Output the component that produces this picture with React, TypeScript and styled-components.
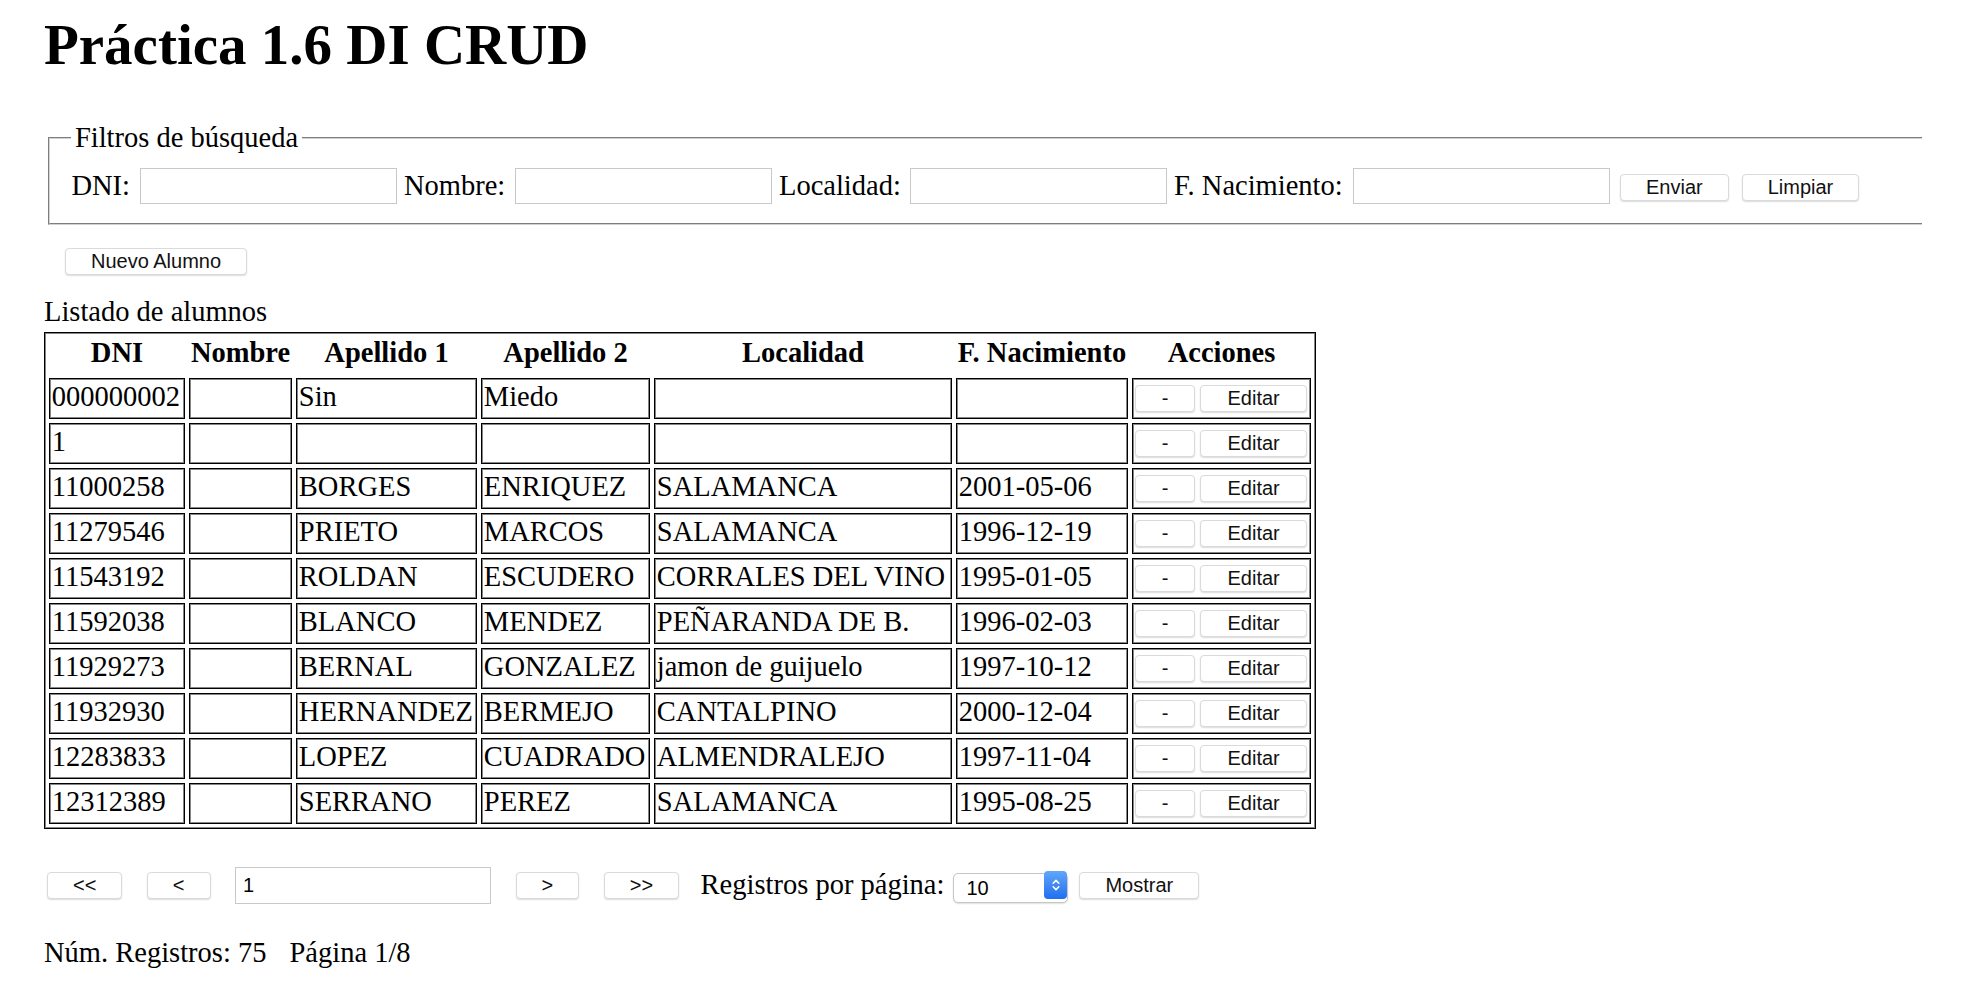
import React from "react";
import styled, { createGlobalStyle } from "styled-components";

const GlobalStyle = createGlobalStyle`
  html, body { margin: 0; padding: 0; background: #ffffff; }
  body {
    font-family: "Liberation Serif", "Times New Roman", Times, serif;
    font-size: 28.5px;
    color: #000;
  }
`;

const Page = styled.div`
  padding: 11.5px 44px 30px;
`;

const Title = styled.h1`
  margin: 0;
  font-size: 57px;
  font-weight: 700;
  line-height: normal;
`;

const Filters = styled.fieldset`
  box-sizing: border-box;
  width: 1874px;
  margin: 45.5px 0 0 4px;
  padding: 11.5px 21.4px 17.8px;
  border: 2px groove #d2d2d2;
  border-right: none;
  min-inline-size: 0;
`;

const Legend = styled.legend`
  padding: 0 3.5px;
  font-size: 28.5px;
  line-height: normal;
`;

const FilterRow = styled.div`
  display: flex;
  align-items: center;
  height: 40px;
  gap: 7px;
`;

const Field = styled.label`
  display: flex;
  align-items: center;
  flex: none;
`;

const FieldLabel = styled.span<{ $w: number }>`
  width: ${(p) => p.$w}px;
  flex: none;
  white-space: nowrap;
`;

const TextInput = styled.input<{ $w?: number; $h?: number }>`
  box-sizing: border-box;
  width: ${(p) => p.$w ?? 257}px;
  height: ${(p) => p.$h ?? 36}px;
  margin: 0;
  padding: 0 7px;
  border: 1px solid #c9c9c9;
  border-radius: 0;
  background: #fff;
  font-family: "Liberation Sans", Arial, Helvetica, sans-serif;
  font-size: 20px;
  color: #000;
  outline: none;
  flex: none;
`;

const Button = styled.button`
  box-sizing: border-box;
  height: 27px;
  margin: 0;
  padding: 0 25px;
  border: 1px solid #dadada;
  border-radius: 4px;
  background: #fff;
  box-shadow: 0 1px 1.5px rgba(0, 0, 0, 0.14);
  font-family: "Liberation Sans", Arial, Helvetica, sans-serif;
  font-size: 20px;
  line-height: 25px;
  color: #111;
  white-space: nowrap;
  cursor: pointer;
  flex: none;
`;

const ActionButton = styled(Button)`
  padding: 0 26px;
`;

const FilterButtons = styled.div`
  display: flex;
  gap: 13px;
  margin-left: 3px;
  margin-top: 3px;
`;

const Toolbar = styled.div`
  display: flex;
  margin-top: 23px;
  padding-left: 21px;
`;

const Caption = styled.div`
  margin-top: 20.5px;
  line-height: normal;
`;

const Table = styled.table`
  margin-top: 3.75px;
  width: 1272px;
  table-layout: fixed;
  border-collapse: separate;
  border-spacing: 4px;
  border: 1px solid #000;
  box-shadow: inset 0 0 0 1px #858585;
  font-size: 28.5px;
`;

const HeadCell = styled.th<{ $w: number }>`
  box-sizing: border-box;
  width: ${(p) => p.$w}px;
  height: 37px;
  padding: 0 1.8px;
  font-weight: 700;
  text-align: center;
  vertical-align: top;
  line-height: 32px;
  white-space: nowrap;
`;

const Cell = styled.td`
  padding: 0 1.8px 3.6px;
  border: 1px solid #000;
  box-shadow: inset 0 0 0 1px #858585;
  line-height: 35.5px;
  white-space: nowrap;
  overflow: hidden;
  vertical-align: middle;
`;

const ActionCell = styled(Cell)`
  padding: 1.8px;
  line-height: normal;
`;

const ActionBox = styled.div`
  display: flex;
  gap: 5px;
`;

const Pager = styled.div`
  display: flex;
  align-items: center;
  gap: 24.5px;
  margin-top: 37.2px;
  padding-left: 3px;
  height: 37px;
`;

const PerPage = styled.div`
  display: flex;
  align-items: center;
  gap: 9px;
  margin-left: -3px;
  white-space: nowrap;
`;

const ShowButton = styled(Button)`
  margin-left: 2px;
`;

const SelectWrap = styled.div`
  position: relative;
  width: 115px;
  height: 30px;
  flex: none;
`;

const Select = styled.select`
  appearance: none;
  -webkit-appearance: none;
  box-sizing: border-box;
  width: 100%;
  height: 100%;
  margin: 0;
  padding: 0 30px 0 12px;
  border: 1px solid #c6c6c6;
  border-radius: 5px;
  background: #fff;
  box-shadow: 0 1px 1.5px rgba(0, 0, 0, 0.12);
  font-family: "Liberation Sans", Arial, Helvetica, sans-serif;
  font-size: 20px;
  color: #000;
  outline: none;
`;

const Stepper = styled.span`
  position: absolute;
  top: 1px;
  right: 1px;
  bottom: 1px;
  width: 23px;
  border-radius: 4px;
  background: linear-gradient(#62a6fb, #1f6ff0);
  display: flex;
  align-items: center;
  justify-content: center;
  pointer-events: none;
`;

const Footer = styled.div`
  display: flex;
  gap: 23px;
  margin-top: 33.8px;
  line-height: normal;
`;

const columns: { label: string; w: number }[] = [
  { label: "DNI", w: 136 },
  { label: "Nombre", w: 103 },
  { label: "Apellido 1", w: 181 },
  { label: "Apellido 2", w: 169 },
  { label: "Localidad", w: 298 },
  { label: "F. Nacimiento", w: 172 },
  { label: "Acciones", w: 179 },
];

const rows: string[][] = [
  ["000000002", "", "Sin", "Miedo", "", ""],
  ["1", "", "", "", "", ""],
  ["11000258", "", "BORGES", "ENRIQUEZ", "SALAMANCA", "2001-05-06"],
  ["11279546", "", "PRIETO", "MARCOS", "SALAMANCA", "1996-12-19"],
  ["11543192", "", "ROLDAN", "ESCUDERO", "CORRALES DEL VINO", "1995-01-05"],
  ["11592038", "", "BLANCO", "MENDEZ", "PEÑARANDA DE B.", "1996-02-03"],
  ["11929273", "", "BERNAL", "GONZALEZ", "jamon de guijuelo", "1997-10-12"],
  ["11932930", "", "HERNANDEZ", "BERMEJO", "CANTALPINO", "2000-12-04"],
  ["12283833", "", "LOPEZ", "CUADRADO", "ALMENDRALEJO", "1997-11-04"],
  ["12312389", "", "SERRANO", "PEREZ", "SALAMANCA", "1995-08-25"],
];

const filters: { label: string; w: number }[] = [
  { label: "DNI:", w: 68.6 },
  { label: "Nombre:", w: 111 },
  { label: "Localidad:", w: 131 },
  { label: "F. Nacimiento:", w: 179 },
];

export default function App() {
  return (
    <>
      <GlobalStyle />
      <Page>
        <Title>Práctica 1.6 DI CRUD</Title>

        <Filters>
          <Legend>Filtros de búsqueda</Legend>
          <FilterRow>
            {filters.map((f) => (
              <Field key={f.label}>
                <FieldLabel $w={f.w}>{f.label}</FieldLabel>
                <TextInput type="text" />
              </Field>
            ))}
            <FilterButtons>
              <Button>Enviar</Button>
              <Button>Limpiar</Button>
            </FilterButtons>
          </FilterRow>
        </Filters>

        <Toolbar>
          <Button>Nuevo Alumno</Button>
        </Toolbar>

        <Caption>Listado de alumnos</Caption>
        <Table>
          <thead>
            <tr>
              {columns.map((c) => (
                <HeadCell key={c.label} $w={c.w}>
                  {c.label}
                </HeadCell>
              ))}
            </tr>
          </thead>
          <tbody>
            {rows.map((r, i) => (
              <tr key={i}>
                {r.map((v, j) => (
                  <Cell key={j}>{v}</Cell>
                ))}
                <ActionCell>
                  <ActionBox>
                    <ActionButton>-</ActionButton>
                    <ActionButton>Editar</ActionButton>
                  </ActionBox>
                </ActionCell>
              </tr>
            ))}
          </tbody>
        </Table>

        <Pager>
          <Button>&lt;&lt;</Button>
          <Button>&lt;</Button>
          <TextInput type="text" $w={256} $h={37} defaultValue="1" />
          <Button>&gt;</Button>
          <Button>&gt;&gt;</Button>
          <PerPage>
            <span>Registros por página:</span>
            <SelectWrap>
              <Select defaultValue="10">
                <option value="5">5</option>
                <option value="10">10</option>
                <option value="20">20</option>
              </Select>
              <Stepper>
                <svg width="10" height="16" viewBox="0 0 10 16" fill="none">
                  <path d="M2.2 6.2 L5 3.4 L7.8 6.2" stroke="#fff" strokeWidth="1.6" strokeLinecap="round" strokeLinejoin="round" />
                  <path d="M2.2 9.8 L5 12.6 L7.8 9.8" stroke="#fff" strokeWidth="1.6" strokeLinecap="round" strokeLinejoin="round" />
                </svg>
              </Stepper>
            </SelectWrap>
            <ShowButton>Mostrar</ShowButton>
          </PerPage>
        </Pager>

        <Footer>
          <span>Núm. Registros: 75</span>
          <span>Página 1/8</span>
        </Footer>
      </Page>
    </>
  );
}
